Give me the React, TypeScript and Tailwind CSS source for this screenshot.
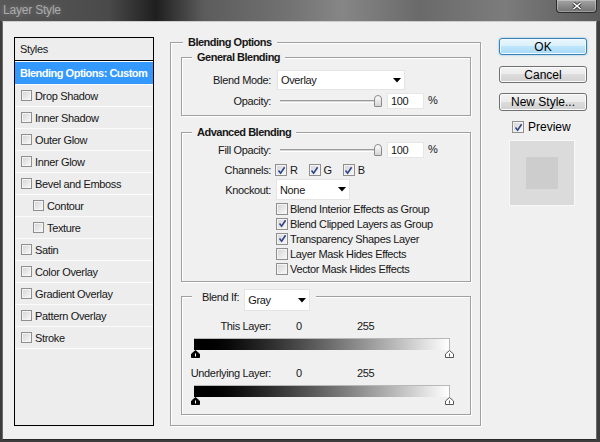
import React from 'react'

type Kid = { children?: React.ReactNode }

function Box({ on, small }: { on?: boolean; small?: boolean }) {
  return (
    <span
      className={`shrink-0 flex items-center justify-center border border-[#8f8f8f] bg-linear-to-br from-[#d3d3d3] to-[#fafafa] shadow-[inset_0_0_0_1px_#f4f4f4] ${
        small ? 'w-[11px] h-[11px]' : 'w-[12px] h-[12px]'
      }`}
    >
      {on && (
        <svg width="9" height="9" viewBox="0 0 9 9">
          <path d="M1.5 4.6 L3.6 7.2 L7.6 1.2" stroke="#30448a" strokeWidth="1.6" fill="none" />
        </svg>
      )}
    </span>
  )
}

function Select({ value, className }: { value: string; className: string }) {
  return (
    <div className={`flex items-center justify-between bg-white border border-[#e4e4e4] pl-[3px] pr-[3px] ${className}`}>
      <span>{value}</span>
      <svg width="8" height="5" viewBox="0 0 8 5">
        <path d="M0 0H8L4 4.5Z" fill="#000" />
      </svg>
    </div>
  )
}

function Label({ children }: Kid) {
  return <span className="w-[89px] shrink-0 text-right">{children}</span>
}

function Slider() {
  return (
    <div className="ml-[9px] w-[102px] flex items-center">
      <div className="flex-1 h-[3px] border-t border-[#9c9c9c] border-b border-b-white bg-[#d6d6d6]" />
      <div className="-ml-[3px] w-[8px] h-[12px] rounded-t-[4px] rounded-b-[1px] border border-[#8a8a8a] bg-linear-to-b from-white to-[#d4d4d4]" />
    </div>
  )
}

function PctRow({ label }: { label: string }) {
  return (
    <div className="flex items-center h-[16px]">
      <Label>{label}</Label>
      <Slider />
      <div className="ml-[5px] w-[37px] h-[16px] flex items-center bg-white border border-[#e6e6e6] pl-[3px]">100</div>
      <span className="ml-[4px] -mt-[3px]">%</span>
    </div>
  )
}

function Marker({ dark }: { dark?: boolean }) {
  return (
    <svg width="9" height="8" viewBox="0 0 9 8">
      <path d="M4.5 0.5 L8.5 4 V7.5 H0.5 V4 Z" fill={dark ? '#000' : '#fff'} stroke={dark ? '#000' : '#555'} />
      <path d="M4.5 3.5V6.5" stroke={dark ? '#fff' : '#555'} strokeWidth="1" />
    </svg>
  )
}

function Ramp({ label }: { label: string }) {
  return (
    <>
      <div className="flex items-center h-[14px]">
        <Label>{label}</Label>
        <span className="ml-[25px] w-[61px]">0</span>
        <span>255</span>
      </div>
      <div className="mt-[5px] ml-[12px] w-[256px] h-[12px] border-t border-r border-[#b8b8b8] bg-linear-to-r from-black to-white" />
      <div className="ml-[9px] w-[263px] h-[8px] flex justify-between">
        <Marker dark />
        <Marker />
      </div>
    </>
  )
}

const etched = 'relative border border-[#a0a0a0] shadow-[inset_1px_1px_0_#fff,1px_1px_0_#fff]'
const legend = 'absolute -top-[8px] px-[5px] bg-[#f0f0f0] font-bold tracking-[-0.5px]'

const styles = [
  { name: 'Drop Shadow' },
  { name: 'Inner Shadow' },
  { name: 'Outer Glow' },
  { name: 'Inner Glow' },
  { name: 'Bevel and Emboss' },
  { name: 'Contour', sub: true },
  { name: 'Texture', sub: true },
  { name: 'Satin' },
  { name: 'Color Overlay' },
  { name: 'Gradient Overlay' },
  { name: 'Pattern Overlay' },
  { name: 'Stroke' },
]

const advanced = [
  { name: 'Blend Interior Effects as Group', on: false },
  { name: 'Blend Clipped Layers as Group', on: true },
  { name: 'Transparency Shapes Layer', on: true },
  { name: 'Layer Mask Hides Effects', on: false },
  { name: 'Vector Mask Hides Effects', on: false },
]

const plainBtn =
  'rounded-[3px] border border-[#707070] bg-[linear-gradient(#f2f2f2,#ebebeb_50%,#dddddd_50%,#cfcfcf)] shadow-[inset_0_0_0_1px_#fcfcfc] flex items-center justify-center'

export default function App() {
  return (
    <div className="w-[600px] h-[442px] flex flex-col overflow-hidden bg-[#3d3d3d] font-['Liberation_Sans',Arial,sans-serif] text-[11px] leading-[14px] tracking-[-0.35px] text-[#161616]">
      {/* title bar */}
      <div className="h-[21px] shrink-0 flex items-start justify-between bg-[linear-gradient(90deg,#585858_0%,#4a4a4a_18%,#1f1f1f_26%,#5c5c5c_34%,#727272_48%,#868686_57%,#6a6a6a_70%,#7c7c7c_84%,#5a5a5a_100%)]">
        <span className="ml-[3px] mt-[3px] text-[12px] tracking-[-0.2px] text-[#ababab] [text-shadow:0_0_5px_rgba(255,255,255,0.25)]">
          Layer Style
        </span>
        <div className="mr-[3px] w-[41px] h-[13px] rounded-b-[4px] border border-t-0 border-[#2c2c2c] bg-[linear-gradient(#a4a4a4,#727272)] shadow-[inset_0_0_0_1px_rgba(255,255,255,0.3)] flex items-center justify-center">
          <svg width="10" height="8" viewBox="0 0 10 8">
            <path d="M1.5 1 L8.5 7 M8.5 1 L1.5 7" stroke="#333" strokeWidth="3.2" />
            <path d="M1.5 1 L8.5 7 M8.5 1 L1.5 7" stroke="#fff" strokeWidth="1.6" />
          </svg>
        </div>
      </div>

      {/* client */}
      <div className="flex-1 ml-[2px] mr-[3px] mb-[2px] border border-t-[#cdcdcd] border-x-[#6b6b6b] border-b-[#2a2a2a] bg-[#f0f0f0] flex items-start pl-[11px]">
        {/* styles list */}
        <div className="mt-[15px] w-[140px] h-[389px] shrink-0 border border-black bg-[#ededed] flex flex-col">
          <div className="h-[23px] shrink-0 border-b border-black pl-[5px] flex items-center">Styles</div>
          <div className="h-[23px] shrink-0 border-t border-white bg-[#3399ff] text-white font-bold tracking-[-0.5px] pl-[5px] flex items-center">
            Blending Options: Custom
          </div>
          {styles.map((s) => (
            <div
              key={s.name}
              className={`h-[22px] shrink-0 border-t border-[#fbfbfb] flex items-center gap-[3px] ${s.sub ? 'pl-[18px]' : 'pl-[6px]'}`}
            >
              <Box small />
              <span>{s.name}</span>
            </div>
          ))}
          <div className="border-t border-[#fbfbfb]" />
        </div>

        {/* blending options */}
        <div className={`${etched} ml-[16px] mt-[20px] w-[311px] shrink-0 pt-[14px] pb-[10px] pl-[10px] pr-[9px]`}>
          <span className={`${legend} left-[12px]`}>Blending Options</span>

          <div className={`${etched} pt-[12px] pb-[6px]`}>
            <span className={`${legend} left-[10px]`}>General Blending</span>
            <div className="flex items-center h-[20px]">
              <Label>Blend Mode:</Label>
              <Select value="Overlay" className="ml-[6px] w-[128px] h-[20px]" />
            </div>
            <div className="mt-[3px]">
              <PctRow label="Opacity:" />
            </div>
          </div>

          <div className={`${etched} mt-[16px] pt-[9px] pb-[5px]`}>
            <span className={`${legend} left-[10px]`}>Advanced Blending</span>
            <PctRow label="Fill Opacity:" />
            <div className="mt-[6px] h-[12px] flex items-center">
              <Label>Channels:</Label>
              <div className="ml-[4px] flex items-center gap-[3px]">
                <Box on />
                <span>R</span>
              </div>
              <div className="ml-[11px] flex items-center gap-[3px]">
                <Box on />
                <span>G</span>
              </div>
              <div className="ml-[11px] flex items-center gap-[3px]">
                <Box on />
                <span>B</span>
              </div>
            </div>
            <div className="mt-[3px] h-[21px] flex items-center">
              <Label>Knockout:</Label>
              <Select value="None" className="ml-[5px] w-[74px] h-[21px]" />
            </div>
            <div className="mt-[1px]">
              {advanced.map((a) => (
                <div key={a.name} className="h-[15px] pl-[94px] flex items-center gap-[2px]">
                  <Box on={a.on} />
                  <span>{a.name}</span>
                </div>
              ))}
            </div>
          </div>

          <div className={`${etched} mt-[14px] pt-[22px] pb-[9px]`}>
            <div className="absolute -top-[8px] left-[10px] pl-[10px] pr-[6px] bg-[#f0f0f0] flex items-start">
              <span className="mt-[1px]">Blend If:</span>
              <Select value="Gray" className="ml-[5px] w-[66px] h-[22px]" />
            </div>
            <Ramp label="This Layer:" />
            <div className="mt-[8px]">
              <Ramp label="Underlying Layer:" />
            </div>
          </div>
        </div>

        {/* buttons */}
        <div className="ml-[18px] mt-[16px] w-[88px] shrink-0 flex flex-col text-[12px] tracking-normal text-black">
          <button
            type="button"
            className="h-[17px] rounded-[3px] border border-[#3c7fb1] bg-[linear-gradient(#eaf6fd,#d9f0fc_50%,#bee6fd_50%,#a7d9f5)] shadow-[0_0_2px_#5ab4ec,inset_0_0_0_1px_#f2faff] flex items-center justify-center"
          >
            OK
          </button>
          <button type="button" className={`mt-[11px] h-[17px] ${plainBtn}`}>
            Cancel
          </button>
          <button type="button" className={`mt-[10px] h-[18px] ${plainBtn}`}>
            New Style...
          </button>
          <div className="mt-[10px] ml-[13px] h-[12px] flex items-center gap-[4px]">
            <Box on />
            <span>Preview</span>
          </div>
          <div className="mt-[7px] ml-[10px] w-[66px] h-[66px] border border-[#f8f8f8] bg-[#dbdbdb] flex items-center justify-center">
            <div className="w-[32px] h-[32px] bg-[#cdcdcd]" />
          </div>
        </div>
      </div>
    </div>
  )
}
